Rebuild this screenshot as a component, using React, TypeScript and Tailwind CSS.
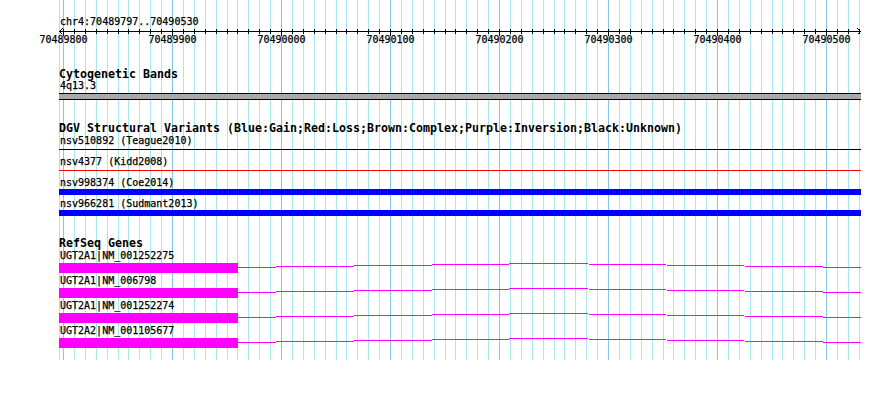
import React from "react";

// 10bp grid, starting at 70489800, ~1.09 px per bp
const ticks = Array.from({ length: 74 }, (_, i) => ({
  x: Math.round(63 + i * 10.9) + 0.5,
  major: i % 10 === 0,
  bp: 70489800 + i * 10,
}));

const dgv = [
  { label: "nsv510892 (Teague2010)", kind: "line", color: "bg-black" },
  { label: "nsv4377 (Kidd2008)", kind: "line", color: "bg-[#ff0000]" },
  { label: "nsv998374 (Coe2014)", kind: "bar", color: "bg-[#0000ff]" },
  { label: "nsv966281 (Sudmant2013)", kind: "bar", color: "bg-[#0000ff]" },
];

const genes = [
  "UGT2A1|NM_001252275",
  "UGT2A1|NM_006798",
  "UGT2A1|NM_001252274",
  "UGT2A2|NM_001105677",
];

function Grid() {
  return (
    <svg
      width={890}
      height={360}
      className="absolute left-0 top-0 pointer-events-none"
      shapeRendering="crispEdges"
    >
      <line x1={59.5} y1={0} x2={59.5} y2={360} stroke="#a6e8ee" />
      {ticks.map((t) => (
        <line
          key={t.bp}
          x1={t.x}
          y1={0}
          x2={t.x}
          y2={360}
          stroke={t.major ? "#86c6ea" : "#a6e8ee"}
        />
      ))}
    </svg>
  );
}

function Ruler() {
  return (
    <svg width={890} height={20} className="block" shapeRendering="crispEdges">
      <line x1={59} y1={3.5} x2={861} y2={3.5} stroke="black" />
      <polyline points="62.5,0.5 59.5,3.5 62.5,6.5" fill="none" stroke="black" />
      <polyline points="857.5,0.5 860.5,3.5 857.5,6.5" fill="none" stroke="black" />
      {ticks.map((t) => (
        <line
          key={t.bp}
          x1={t.x}
          y1={1}
          x2={t.x}
          y2={t.major ? 8 : 6}
          stroke="black"
        />
      ))}
      {ticks
        .filter((t) => t.major)
        .map((t) => (
          <text
            key={t.bp}
            x={t.x}
            y={15}
            textAnchor="middle"
            fontSize={10}
            fontFamily="'DejaVu Sans Mono', monospace"
            fill="black"
            stroke="black"
            strokeWidth={0.25}
          >
            {t.bp}
          </text>
        ))}
    </svg>
  );
}

function TrackTitle({ children, className }: { children: React.ReactNode; className: string }) {
  return (
    <div className={"pl-[59px] text-[11.63px] leading-[12px] font-bold whitespace-nowrap " + className}>
      {children}
    </div>
  );
}

function Label({ children }: { children: React.ReactNode }) {
  return (
    <div className="pl-[60px] text-[10px] leading-[12px] whitespace-nowrap [-webkit-text-stroke:0.25px_black]">
      {children}
    </div>
  );
}

export default function App() {
  return (
    <div className="relative w-[890px] h-[399px] bg-white overflow-hidden text-black font-['DejaVu_Sans_Mono',monospace]">
      <Grid />
      <div className="relative flex flex-col">
        <div className="pt-[16px] pl-[60px] text-[10px] leading-[12px] [-webkit-text-stroke:0.25px_black]">
          chr4:70489797..70490530
        </div>
        <Ruler />

        <TrackTitle className="mt-[20px]">Cytogenetic Bands</TrackTitle>
        <Label>4q13.3</Label>
        <div className="ml-[59px] mt-[1px] w-[802px] h-[7px] bg-[#a9a9a9] border-y border-black" />

        <TrackTitle className="mt-[22px]">
          DGV Structural Variants (Blue:Gain;Red:Loss;Brown:Complex;Purple:Inversion;Black:Unknown)
        </TrackTitle>
        <div className="flex flex-col gap-[3px] mt-[1px]">
          {dgv.map((v) => (
            <div key={v.label}>
              <Label>{v.label}</Label>
              {v.kind === "line" ? (
                <div className="ml-[59px] w-[802px] h-[6px] pt-[2px]">
                  <div className={"h-[1px] " + v.color} />
                </div>
              ) : (
                <div className={"ml-[59px] w-[802px] h-[6px] " + v.color} />
              )}
            </div>
          ))}
        </div>

        <TrackTitle className="mt-[21px]">RefSeq Genes</TrackTitle>
        <div className="flex flex-col gap-[2px] mt-[1px]">
          {genes.map((g) => (
            <div key={g}>
              <Label>{g}</Label>
              <div className="flex ml-[59px] mt-[1px] h-[10px]">
                <div className="w-[179px] h-[10px] bg-[#ff00ff]" />
                <svg width={623} height={10} className="block" shapeRendering="crispEdges">
                  <polyline points="0,4.5 311,0.5 623,4.5" fill="none" stroke="#ff00ff" />
                </svg>
              </div>
            </div>
          ))}
        </div>
      </div>
    </div>
  );
}
